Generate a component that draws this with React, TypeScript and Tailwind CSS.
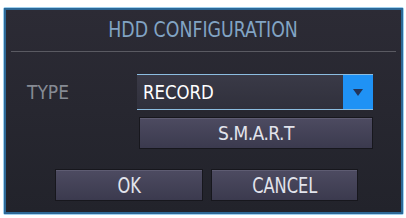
import React from 'react';

const font = "[font-family:'DejaVu_Sans_Condensed','DejaVu_Sans','Liberation_Sans',sans-serif]";

const Button: React.FC<{ label: string; className?: string; textClass?: string }> = ({ label, className = '', textClass = '' }) => (
  <div
    className={`flex items-center justify-center bg-gradient-to-b from-[#4d4b61] to-[#3b3a4e] border border-[#17171d] shadow-[inset_0_1px_0_#5e5c72] text-[#e2e4ec] ${className}`}
  >
    <span className={`inline-block ${textClass}`}>{label}</span>
  </div>
);

const App: React.FC = () => {
  return (
    <div className={`w-[406px] h-[218px] bg-white pt-[7px] pl-[3px] ${font}`}>
      <div className="w-[401px] h-[208px] border border-[#9fd0ee] rounded-[2px]">
        <div className="w-full h-full border-2 border-[#2c6896] bg-gradient-to-b from-[#2c2b35] to-[#22232b] flex flex-col">
          {/* Title */}
          <div className="h-[42px] mx-[5px] flex items-center justify-center border-b border-[#5a5a62] text-[#82a4c4] text-[21px] font-light">
            <span className="inline-block scale-x-[0.92]">HDD CONFIGURATION</span>
          </div>

          {/* Type row */}
          <div className="flex items-center mt-[22px] pl-[21px]">
            <span className="w-[110px] text-[#868b94] text-[19px]">TYPE</span>
            <div className="w-[236px] h-[36px] flex border-y border-[#8cbde0] bg-gradient-to-b from-[#3a3a47] to-[#30303c]">
              <span className="flex-1 flex items-center pl-[6px] text-white text-[20px]">
                <span className="inline-block origin-left scale-x-[0.92]">RECORD</span>
              </span>
              <div className="w-[30px] bg-[#1f92f5] flex items-center justify-center">
                <svg width="10" height="7" viewBox="0 0 10 7">
                  <path d="M0 0 L10 0 L5 7 Z" fill="#23345a" />
                </svg>
              </div>
            </div>
          </div>

          {/* S.M.A.R.T */}
          <div className="flex pl-[133px] mt-[7px]">
            <Button label="S.M.A.R.T" className="w-[234px] h-[32px] text-[19px] tracking-[-0.5px]" />
          </div>

          {/* OK / Cancel */}
          <div className="flex gap-[8px] pl-[49px] mt-[20px]">
            <Button label="OK" className="w-[148px] h-[32px] text-[22px]" textClass="scale-x-[0.82]" />
            <Button label="CANCEL" className="w-[147px] h-[32px] text-[22px]" textClass="scale-x-[0.82]" />
          </div>
        </div>
      </div>
    </div>
  );
};

export default App;
